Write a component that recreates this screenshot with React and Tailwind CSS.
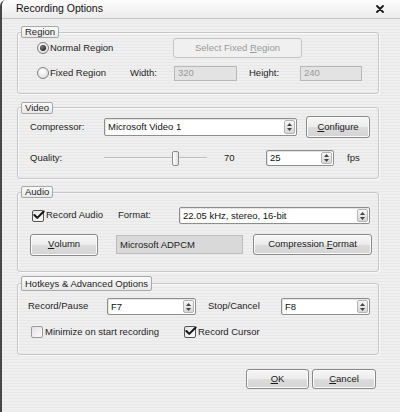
import { Check } from 'lucide-react'

const font = "font-['Liberation_Sans',Arial,sans-serif]"

function Spin() {
  return (
    <div className="my-[1px] mr-[1px] w-[11px] self-stretch rounded-[2px] border border-[#b4b4b4] bg-[linear-gradient(180deg,#f7f7f7,#d6d6d6)] flex flex-col items-center justify-center gap-[2px]">
      <svg width="5" height="3" viewBox="0 0 5 3"><path d="M0 3 L2.5 0 L5 3 Z" fill="#444" /></svg>
      <svg width="5" height="3" viewBox="0 0 5 3"><path d="M0 0 L2.5 3 L5 0 Z" fill="#444" /></svg>
    </div>
  )
}

function Select({ value, className }) {
  return (
    <div className={`flex items-center border border-[#8e8e8e] rounded-[2px] bg-white shadow-[inset_1px_1px_0_#e4e4e4] ${className}`}>
      <span className="flex-1 pl-[3px] pt-[1px] text-[#111] whitespace-nowrap overflow-hidden">{value}</span>
      <Spin />
    </div>
  )
}

function Btn({ children, className = '', disabled }) {
  return (
    <div
      className={`flex items-center justify-center rounded-[3px] border whitespace-nowrap ${
        disabled
          ? 'border-[#c4c4c4] bg-[#f0f0f0] text-[#9a9a9a]'
          : 'border-[#8a8a8a] bg-[linear-gradient(180deg,#f6f6f6_0%,#ececec_50%,#dcdcdc_51%,#d4d4d4_100%)] text-[#1a1a1a] shadow-[inset_0_0_0_1px_#fbfbfb]'
      } ${className}`}
    >
      {children}
    </div>
  )
}

function Radio({ on, label, className }) {
  return (
    <div className={`flex items-center gap-[1px] ${className}`}>
      <div className="w-[12px] h-[12px] rounded-full border border-[#7e7e7e] bg-[radial-gradient(circle_at_40%_35%,#ffffff,#d6d6d6)] flex items-center justify-center">
        {on && <div className="w-[6px] h-[6px] rounded-full bg-[radial-gradient(circle_at_35%_35%,#777,#111)]" />}
      </div>
      <span>{label}</span>
    </div>
  )
}

function Checkbox({ on, label, className }) {
  return (
    <div className={`flex items-center gap-[2px] ${className}`}>
      <div className={`relative w-[12px] h-[12px] rounded-[2px] border ${on ? 'border-[#555]' : 'border-[#9a9a9a]'} bg-[linear-gradient(135deg,#e2e2e2,#fbfbfb)]`}>
        {on && <Check className="absolute -top-[3px] -left-[1px]" size={14} strokeWidth={3.4} color="#151515" />}
      </div>
      <span>{label}</span>
    </div>
  )
}

function Group({ label, tab = 'h-[12px]', pull = '-mt-[6px]', box, className = '', children }) {
  return (
    <div className={`flex flex-col ${className}`}>
      <div className={`relative z-10 self-start ml-[4px] px-[3px] flex items-center rounded-[2px] border border-[#a8a8a8] bg-[linear-gradient(180deg,#fbfbfb,#e8e8e8)] leading-none ${tab}`}>
        {label}
      </div>
      <div className={`${pull} ${box} rounded-[3px] border border-[#c6c6c6] shadow-[inset_1px_1px_0_#fafafa,1px_1px_0_#fafafa]`}>
        {children}
      </div>
    </div>
  )
}

const U = ({ children }) => <span className="underline underline-offset-1">{children}</span>

export default function App() {
  return (
    <div className={`w-[400px] h-[412px] bg-white ${font} text-[9.5px] text-[#1e1e1e]`}>
      <div className="w-full h-full flex flex-col overflow-hidden rounded-tl-[6px] border-l-2 border-[#474747] bg-[repeating-linear-gradient(180deg,#efefef_0px,#efefef_2px,#e8e8e8_2px,#e8e8e8_3px)]">
        {/* title bar */}
        <div className="h-[19px] shrink-0 flex items-center justify-between pl-[14px] pr-[16px] border-b border-[#c4c4c4] bg-[linear-gradient(180deg,#fdfdfd,#ebebeb)]">
          <span className="text-[10.5px] text-[#111]">Recording Options</span>
          <svg width="8" height="8" viewBox="0 0 8 8">
            <path d="M1 1 L7 7 M7 1 L1 7" stroke="#1a1a1a" strokeWidth="1.8" strokeLinecap="round" />
          </svg>
        </div>

        <div className="flex flex-col pl-[15px] pr-[21px] pt-[7px]">
          <Group label="Region" box="h-[62px] pl-[19px] pt-[5px]">
            <div className="flex items-center h-[20px]">
              <Radio on label="Normal Region" className="w-[136px]" />
              <Btn disabled className="w-[129px] h-[20px]">
                Select Fixed&nbsp;<U>R</U>egion
              </Btn>
            </div>
            <div className="flex items-center h-[14px] mt-[8px]">
              <Radio label="Fixed Region" className="w-[93px]" />
              <span className="w-[44px]">Width:</span>
              <div className="w-[63px] h-[15px] border border-[#b8b8b8] bg-[#e3e3e3] pl-[3px] flex items-center text-[#9a9a9a]">320</div>
              <span className="ml-[12px] w-[51px]">Height:</span>
              <div className="w-[62px] h-[15px] border border-[#b8b8b8] bg-[#e3e3e3] pl-[3px] flex items-center text-[#9a9a9a]">240</div>
            </div>
          </Group>

          <Group label="Video" pull="-mt-[7px]" className="mt-[8px]" box="h-[72px] pl-[12px] pt-[8px]">
            <div className="flex items-center h-[22px]">
              <span className="w-[74px]">Compressor:</span>
              <Select value="Microsoft Video 1" className="w-[193px] h-[18px]" />
              <Btn className="ml-[9px] w-[64px] h-[22px]">
                <U>C</U>onfigure
              </Btn>
            </div>
            <div className="flex items-center h-[16px] mt-[12px]">
              <span className="w-[74px]">Quality:</span>
              <div className="w-[103px] flex items-center">
                <div className="w-[68px] h-[2px] bg-[#bdbdbd] border-b border-[#f4f4f4]" />
                <div className="w-[7px] h-[15px] rounded-[2px] border border-[#8a8a8a] bg-[linear-gradient(90deg,#ffffff,#e0e0e0)]" />
                <div className="flex-1 h-[2px] bg-[#bdbdbd] border-b border-[#f4f4f4]" />
              </div>
              <span className="ml-[17px] w-[42px]">70</span>
              <Select value="25" className="w-[68px] h-[16px]" />
              <span className="ml-[13px]">fps</span>
            </div>
          </Group>

          <Group label="Audio" className="mt-[7px]" box="h-[80px] pl-[14px] pt-[14px]">
            <div className="flex items-center h-[17px]">
              <Checkbox on label="Record Audio" className="w-[86px]" />
              <span className="w-[61px]">Format:</span>
              <Select value="22.05 kHz, stereo, 16-bit" className="w-[191px] h-[17px]" />
            </div>
            <div className="flex items-center h-[23px] mt-[9px]">
              <Btn className="-ml-[2px] w-[68px] h-[22px]">
                <U>V</U>olumn
              </Btn>
              <div className="ml-[18px] w-[127px] h-[19px] border border-[#bdbdbd] bg-[#d9d9d9] pl-[3px] pt-[2px] text-[#222]">
                Microsoft ADPCM
              </div>
              <Btn className="ml-[10px] w-[119px] h-[21px]">
                Compression&nbsp;<U>F</U>ormat
              </Btn>
            </div>
          </Group>

          <Group label="Hotkeys &amp; Advanced Options" tab="h-[15px]" pull="-mt-[8px]" className="mt-[4px]" box="h-[72px] pl-[10px] pt-[14px]">
            <div className="flex items-center h-[17px]">
              <span className="w-[79px]">Record/Pause</span>
              <Select value="F7" className="w-[89px] h-[17px]" />
              <span className="ml-[12px] w-[73px]">Stop/Cancel</span>
              <Select value="F8" className="w-[89px] h-[17px]" />
            </div>
            <div className="flex items-center h-[14px] mt-[10px]">
              <Checkbox label="Minimize on start recording" className="ml-[3px] w-[153px]" />
              <Checkbox on label="Record Cursor" />
            </div>
          </Group>

          <div className="flex justify-end gap-[3px] mt-[14px] mr-[3px]">
            <Btn className="w-[63px] h-[20px]">
              <U>O</U>K
            </Btn>
            <Btn className="w-[64px] h-[20px]">
              <U>C</U>ancel
            </Btn>
          </div>
        </div>
      </div>
    </div>
  )
}
